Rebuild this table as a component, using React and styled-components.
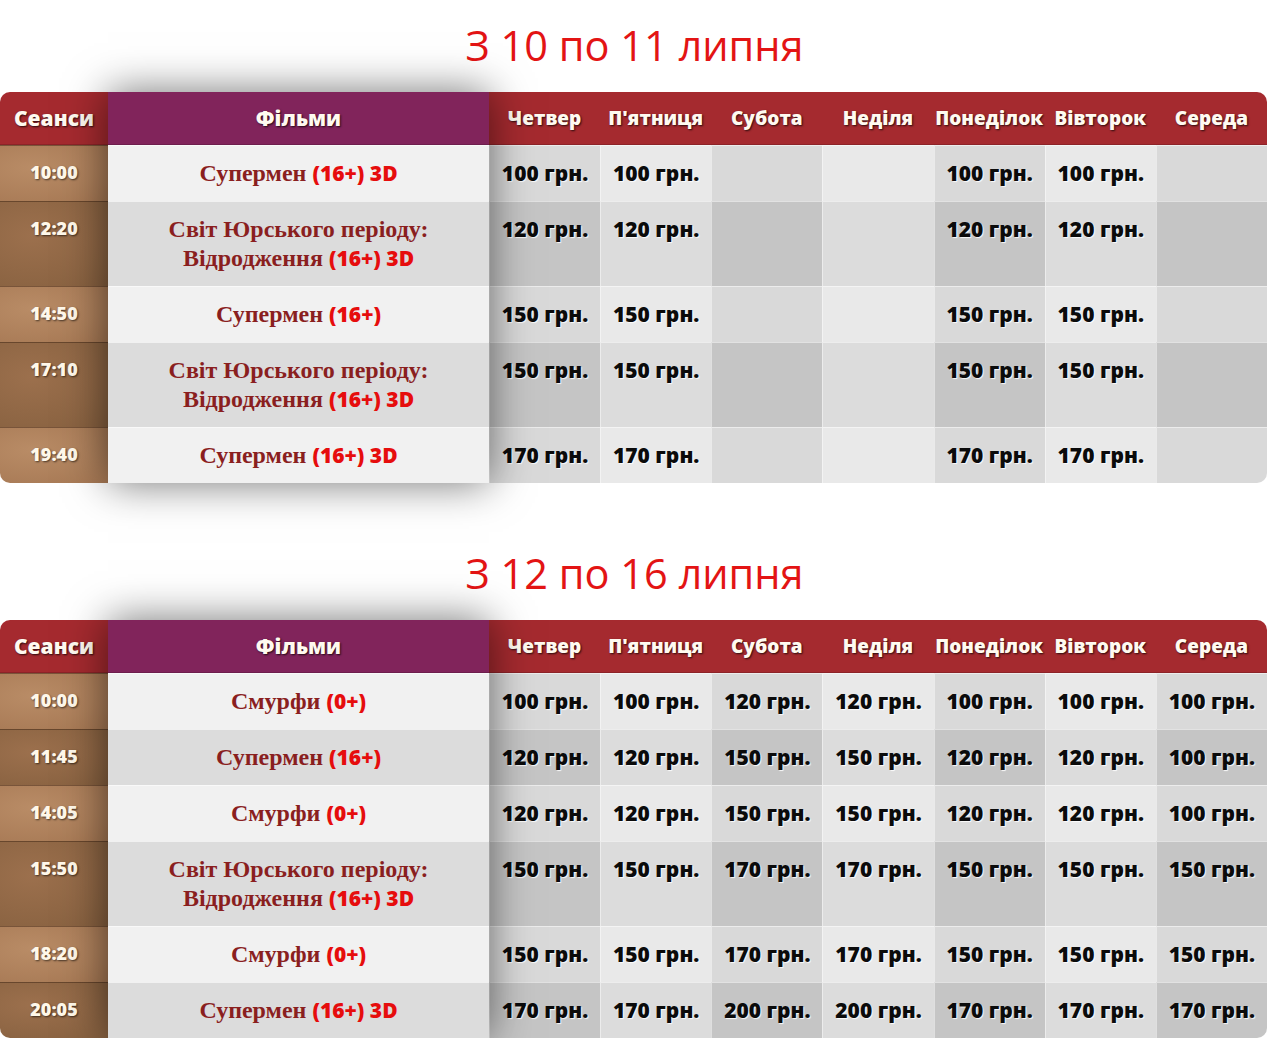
import React from "react";
import styled, { createGlobalStyle } from "styled-components";

const Global = createGlobalStyle`
  html, body { margin: 0; padding: 0; background: #ffffff; }
  body { font-family: "Open Sans", "Liberation Sans", sans-serif; }
`;

const Page = styled.div`
  width: 1269px;
  display: flex;
  flex-direction: column;
  gap: 66px;
  padding-top: 21px;
`;

const Section = styled.section`
  display: flex;
  flex-direction: column;
  align-items: stretch;
`;

const Title = styled.h2`
  margin: 0 0 23px;
  text-align: center;
  font-family: "Open Sans", sans-serif;
  font-weight: 400;
  font-size: 41.5px;
  line-height: 48px;
  color: #e31414;
`;

const Grid = styled.div`
  width: 1267px;
  display: grid;
  grid-template-columns: 108px 381px repeat(7, 1fr);
  grid-template-rows: ${(p) => p.$rows};
`;

const ShadowColumn = styled.div`
  grid-column: 2;
  grid-row: 1 / span ${(p) => p.$span};
  z-index: 1;
  box-shadow: 0 0 40px rgba(0, 0, 0, 0.55);
`;

const Head = styled.div`
  grid-row: 1;
  grid-column: ${(p) => p.$col};
  display: flex;
  align-items: center;
  justify-content: center;
  height: 53px;
  background: ${(p) => (p.$film ? "#81245b" : "#a52a2f")};
  border-radius: ${(p) => p.$radius || "0"};
  color: #fffaf0;
  font-family: "Open Sans", sans-serif;
  font-weight: 800;
  font-size: ${(p) => (p.$big ? "21px" : "19px")};
  white-space: nowrap;
  text-shadow: 1px 1px 2px rgba(0, 0, 0, 0.75);
  position: relative;
  z-index: ${(p) => (p.$film ? 2 : "auto")};
  border-bottom: 1px solid rgba(0, 0, 0, 0.15);
  box-sizing: border-box;
`;

const Time = styled.div`
  grid-row: ${(p) => p.$row};
  grid-column: 1;
  padding: 13px 0 0;
  text-align: center;
  background: ${(p) =>
    p.$even
      ? "radial-gradient(ellipse at 30% 40%, #9c704d 0%, #86603f 100%)"
      : "radial-gradient(ellipse at 30% 40%, #b98c66 0%, #a57753 100%)"};
  border-radius: ${(p) => (p.$last ? "0 0 0 10px" : "0")};
  color: #fff8ea;
  font-family: "Open Sans", sans-serif;
  font-weight: 800;
  font-size: 18px;
  line-height: 26px;
  text-shadow: 1px 1px 2px rgba(0, 0, 0, 0.6);
  border-top: 1px solid rgba(60, 35, 20, 0.45);
  box-sizing: border-box;
`;

const Film = styled.div`
  grid-row: ${(p) => p.$row};
  grid-column: 2;
  position: relative;
  z-index: 2;
  padding: 13px 6px;
  text-align: center;
  background: ${(p) => (p.$even ? "#dcdcdc" : "#f1f1f1")};
  border-top: 1px solid rgba(255, 255, 255, 0.6);
  font-family: "Liberation Serif", "Times New Roman", serif;
  font-weight: 700;
  font-size: 24px;
  line-height: 29px;
  color: #8a1f1f;
  box-sizing: border-box;
`;

const Rating = styled.span`
  font-family: "Open Sans", sans-serif;
  font-weight: 800;
  font-size: 21px;
  color: #e60d0d;
`;

const shades = {
  oddDark: "#d9d9d9",
  oddLight: "#e9e9e9",
  evenDark: "#c5c5c5",
  evenLight: "#dcdcdc",
};

const Price = styled.div`
  grid-row: ${(p) => p.$row};
  grid-column: ${(p) => p.$col};
  padding: 13px 0;
  text-align: center;
  background: ${(p) =>
    p.$even
      ? p.$dark
        ? shades.evenDark
        : shades.evenLight
      : p.$dark
      ? shades.oddDark
      : shades.oddLight};
  border-radius: ${(p) => (p.$corner ? "0 0 10px 0" : "0")};
  border-top: 1px solid rgba(255, 255, 255, 0.5);
  border-left: 1px solid rgba(255, 255, 255, 0.45);
  font-family: "Open Sans", sans-serif;
  font-weight: 800;
  font-size: 21px;
  line-height: 29px;
  color: #0b0b0b;
  white-space: nowrap;
  text-shadow: 1px 1px 1px rgba(255, 255, 255, 0.9);
  box-sizing: border-box;
`;

const days = [
  "Четвер",
  "П'ятниця",
  "Субота",
  "Неділя",
  "Понеділок",
  "Вівторок",
  "Середа",
];

const week1 = {
  title: "З 10 по 11 липня",
  rows: [
    { time: "10:00", name: "Супермен", tag: "(16+) 3D", prices: [100, 100, 0, 0, 100, 100, 0] },
    { time: "12:20", name: "Світ Юрського періоду:", name2: "Відродження", tag: "(16+) 3D", prices: [120, 120, 0, 0, 120, 120, 0] },
    { time: "14:50", name: "Супермен", tag: "(16+)", prices: [150, 150, 0, 0, 150, 150, 0] },
    { time: "17:10", name: "Світ Юрського періоду:", name2: "Відродження", tag: "(16+) 3D", prices: [150, 150, 0, 0, 150, 150, 0] },
    { time: "19:40", name: "Супермен", tag: "(16+) 3D", prices: [170, 170, 0, 0, 170, 170, 0] },
  ],
};

const week2 = {
  title: "З 12 по 16 липня",
  rows: [
    { time: "10:00", name: "Смурфи", tag: "(0+)", prices: [100, 100, 120, 120, 100, 100, 100] },
    { time: "11:45", name: "Супермен", tag: "(16+)", prices: [120, 120, 150, 150, 120, 120, 100] },
    { time: "14:05", name: "Смурфи", tag: "(0+)", prices: [120, 120, 150, 150, 120, 120, 100] },
    { time: "15:50", name: "Світ Юрського періоду:", name2: "Відродження", tag: "(16+) 3D", prices: [150, 150, 170, 170, 150, 150, 150] },
    { time: "18:20", name: "Смурфи", tag: "(0+)", prices: [150, 150, 170, 170, 150, 150, 150] },
    { time: "20:05", name: "Супермен", tag: "(16+) 3D", prices: [170, 170, 200, 200, 170, 170, 170] },
  ],
};

function Schedule({ data }) {
  const n = data.rows.length;
  return (
    <Section>
      <Title>{data.title}</Title>
      <Grid $rows={`53px repeat(${n}, auto)`}>
        <ShadowColumn $span={n + 1} />
        <Head $col={1} $big $radius="10px 0 0 0">
          Сеанси
        </Head>
        <Head $col={2} $film $big>
          Фільми
        </Head>
        {days.map((d, k) => (
          <Head key={d} $col={k + 3} $radius={k === 6 ? "0 10px 0 0" : "0"}>
            {d}
          </Head>
        ))}
        {data.rows.map((r, i) => {
          const even = i % 2 === 1;
          const row = i + 2;
          const last = i === n - 1;
          return (
            <React.Fragment key={i}>
              <Time $row={row} $even={even} $last={last}>
                {r.time}
              </Time>
              <Film $row={row} $even={even}>
                {r.name2 ? (
                  <>
                    {r.name}
                    <br />
                    {r.name2} <Rating>{r.tag}</Rating>
                  </>
                ) : (
                  <>
                    {r.name} <Rating>{r.tag}</Rating>
                  </>
                )}
              </Film>
              {r.prices.map((p, j) => (
                <Price
                  key={j}
                  $row={row}
                  $col={j + 3}
                  $even={even}
                  $dark={j % 2 === 0}
                  $corner={last && j === 6}
                >
                  {p ? `${p} грн.` : ""}
                </Price>
              ))}
            </React.Fragment>
          );
        })}
      </Grid>
    </Section>
  );
}

export default function App() {
  return (
    <>
      <Global />
      <Page>
        <Schedule data={week1} />
        <Schedule data={week2} />
      </Page>
    </>
  );
}
